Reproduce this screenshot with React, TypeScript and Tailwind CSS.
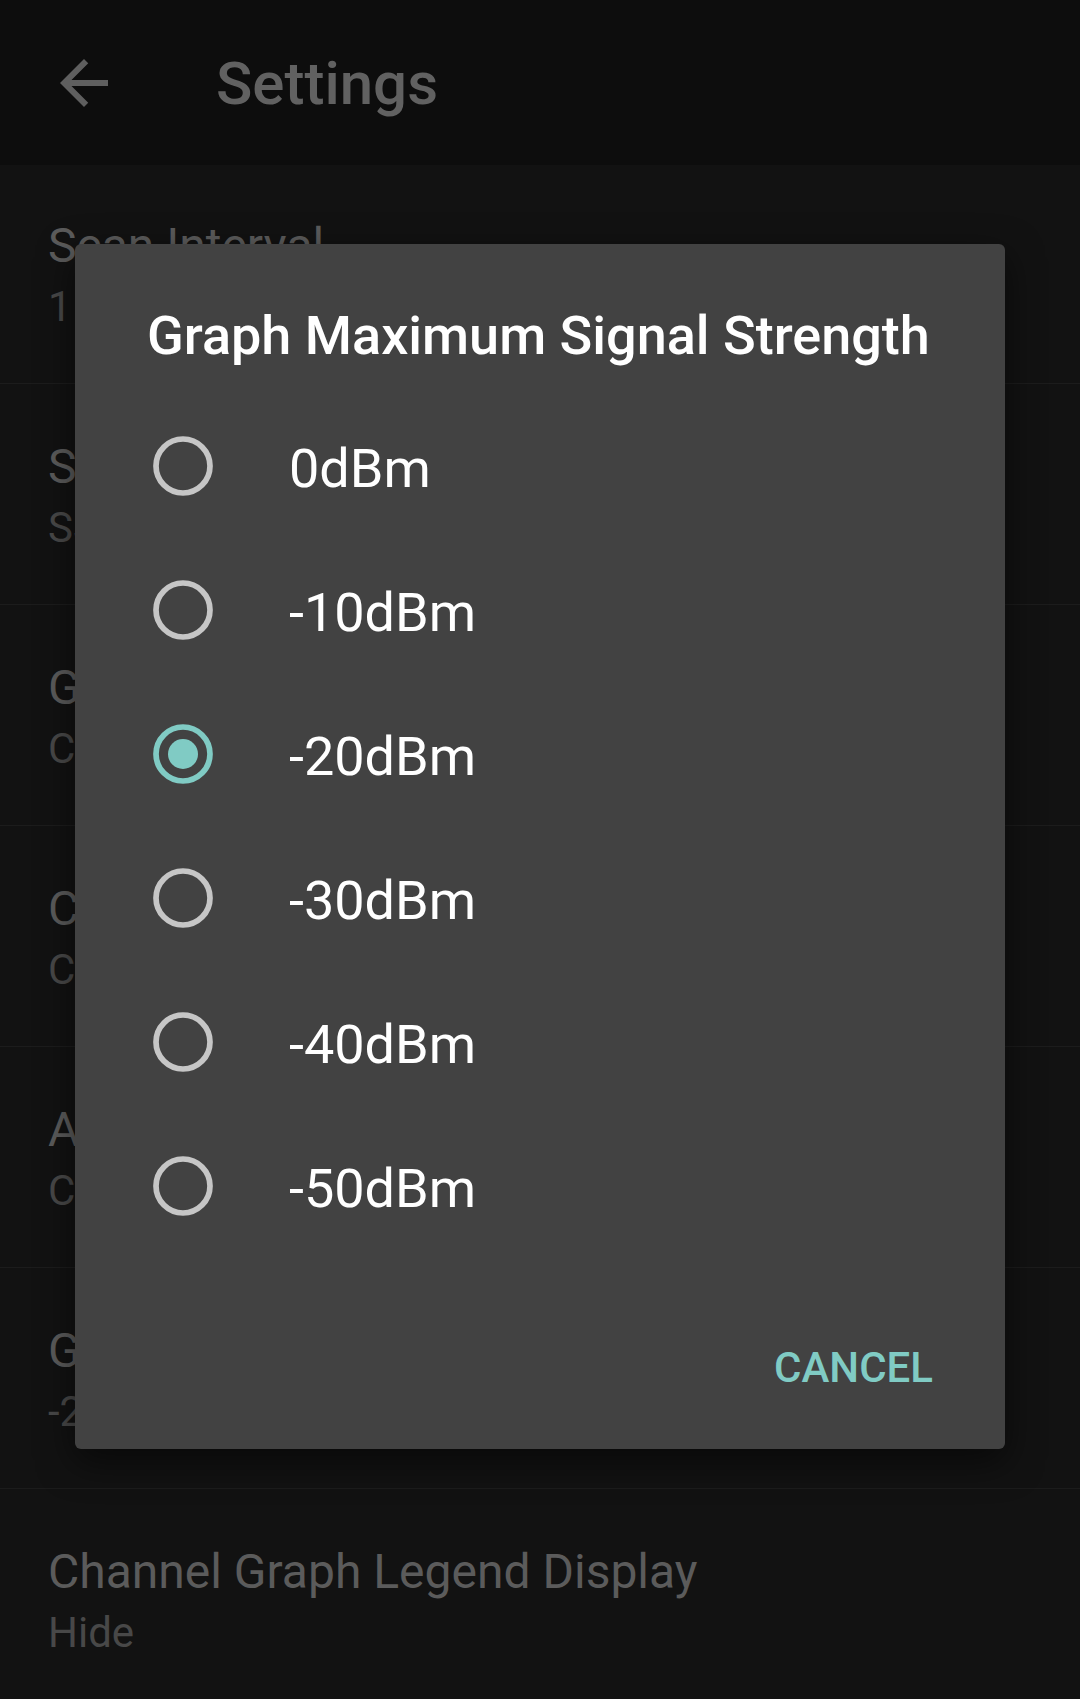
import { useState } from "react";

const settings = [
  { title: "Scan Interval", summary: "1 second" },
  { title: "Sort By", summary: "SSID" },
  { title: "Group By", summary: "Channel" },
  { title: "Connection View", summary: "Complete" },
  { title: "AP View", summary: "Complete" },
  { title: "Graph Maximum Signal Strength", summary: "-20dBm" },
  { title: "Channel Graph Legend Display", summary: "Hide" },
];

const options = ["0dBm", "-10dBm", "-20dBm", "-30dBm", "-40dBm", "-50dBm"];

function Radio({ checked }: { checked: boolean }) {
  const color = checked ? "#80cbc4" : "#c6c6c6";
  return (
    <svg width="72" height="72" viewBox="0 0 24 24">
      <circle cx="12" cy="12" r="9" fill="none" stroke={color} strokeWidth="1.9" />
      {checked && <circle cx="12" cy="12" r="5" fill={color} />}
    </svg>
  );
}

export default function App() {
  const [selected, setSelected] = useState<string>("-20dBm");

  return (
    <main className="relative w-[1080px] h-[1699px] overflow-hidden bg-[#121212] font-['Roboto','Noto_Sans',sans-serif]">
      {/* toolbar */}
      <div className="flex h-[165px] items-center bg-[#0d0d0d]">
        <div className="flex w-[216px] pl-[48px]">
          <svg width="72" height="72" viewBox="0 0 24 24">
            <path
              d="M20 11H7.83l5.59-5.59L12 4l-8 8 8 8 1.41-1.41L7.83 13H20v-2z"
              fill="#5f5f5f"
            />
          </svg>
        </div>
        <span className="mt-[2px] text-[60px] font-medium leading-[70px] text-[#616161]">
          Settings
        </span>
      </div>

      {/* preference list */}
      <div className="flex flex-col">
        {settings.map((item, idx) => (
          <div
            key={idx}
            className={`${idx === 0 ? "h-[219px] pt-[53px]" : "h-[221px] pt-[55px]"} border-b border-[#1c1c1c] pl-[48px]`}
          >
            <div className="text-[48px] leading-[56px] text-[#5b5b5b] whitespace-nowrap">
              {item.title}
            </div>
            <div className="mt-[8px] text-[42px] leading-[49px] text-[#484848] whitespace-nowrap">
              {item.summary}
            </div>
          </div>
        ))}
      </div>

      {/* dialog */}
      <div className="absolute left-[75px] top-[244px] flex h-[1205px] w-[930px] flex-col rounded-[6px] bg-[#424242] shadow-[0_12px_36px_rgba(0,0,0,0.55)]">
        <div className="pl-[72px] pt-[60px] text-[54px] font-medium leading-[64px] text-white whitespace-nowrap">
          Graph Maximum Signal Strength
        </div>
        <div className="mt-[26px] flex flex-col">
          {options.map((opt) => (
            <button
              key={opt}
              onClick={() => setSelected(opt)}
              className="flex h-[144px] items-center pl-[72px] text-left"
            >
              <Radio checked={selected === opt} />
              <span className="ml-[70px] pt-[5px] text-[54px] leading-[64px] text-white">
                {opt}
              </span>
            </button>
          ))}
        </div>
        <div className="mt-auto flex justify-end pb-[27px] pr-[72px]">
          <button className="h-[108px] text-[42px] font-medium leading-[50px] text-[#80cbc4]">
            CANCEL
          </button>
        </div>
      </div>
    </main>
  );
}
